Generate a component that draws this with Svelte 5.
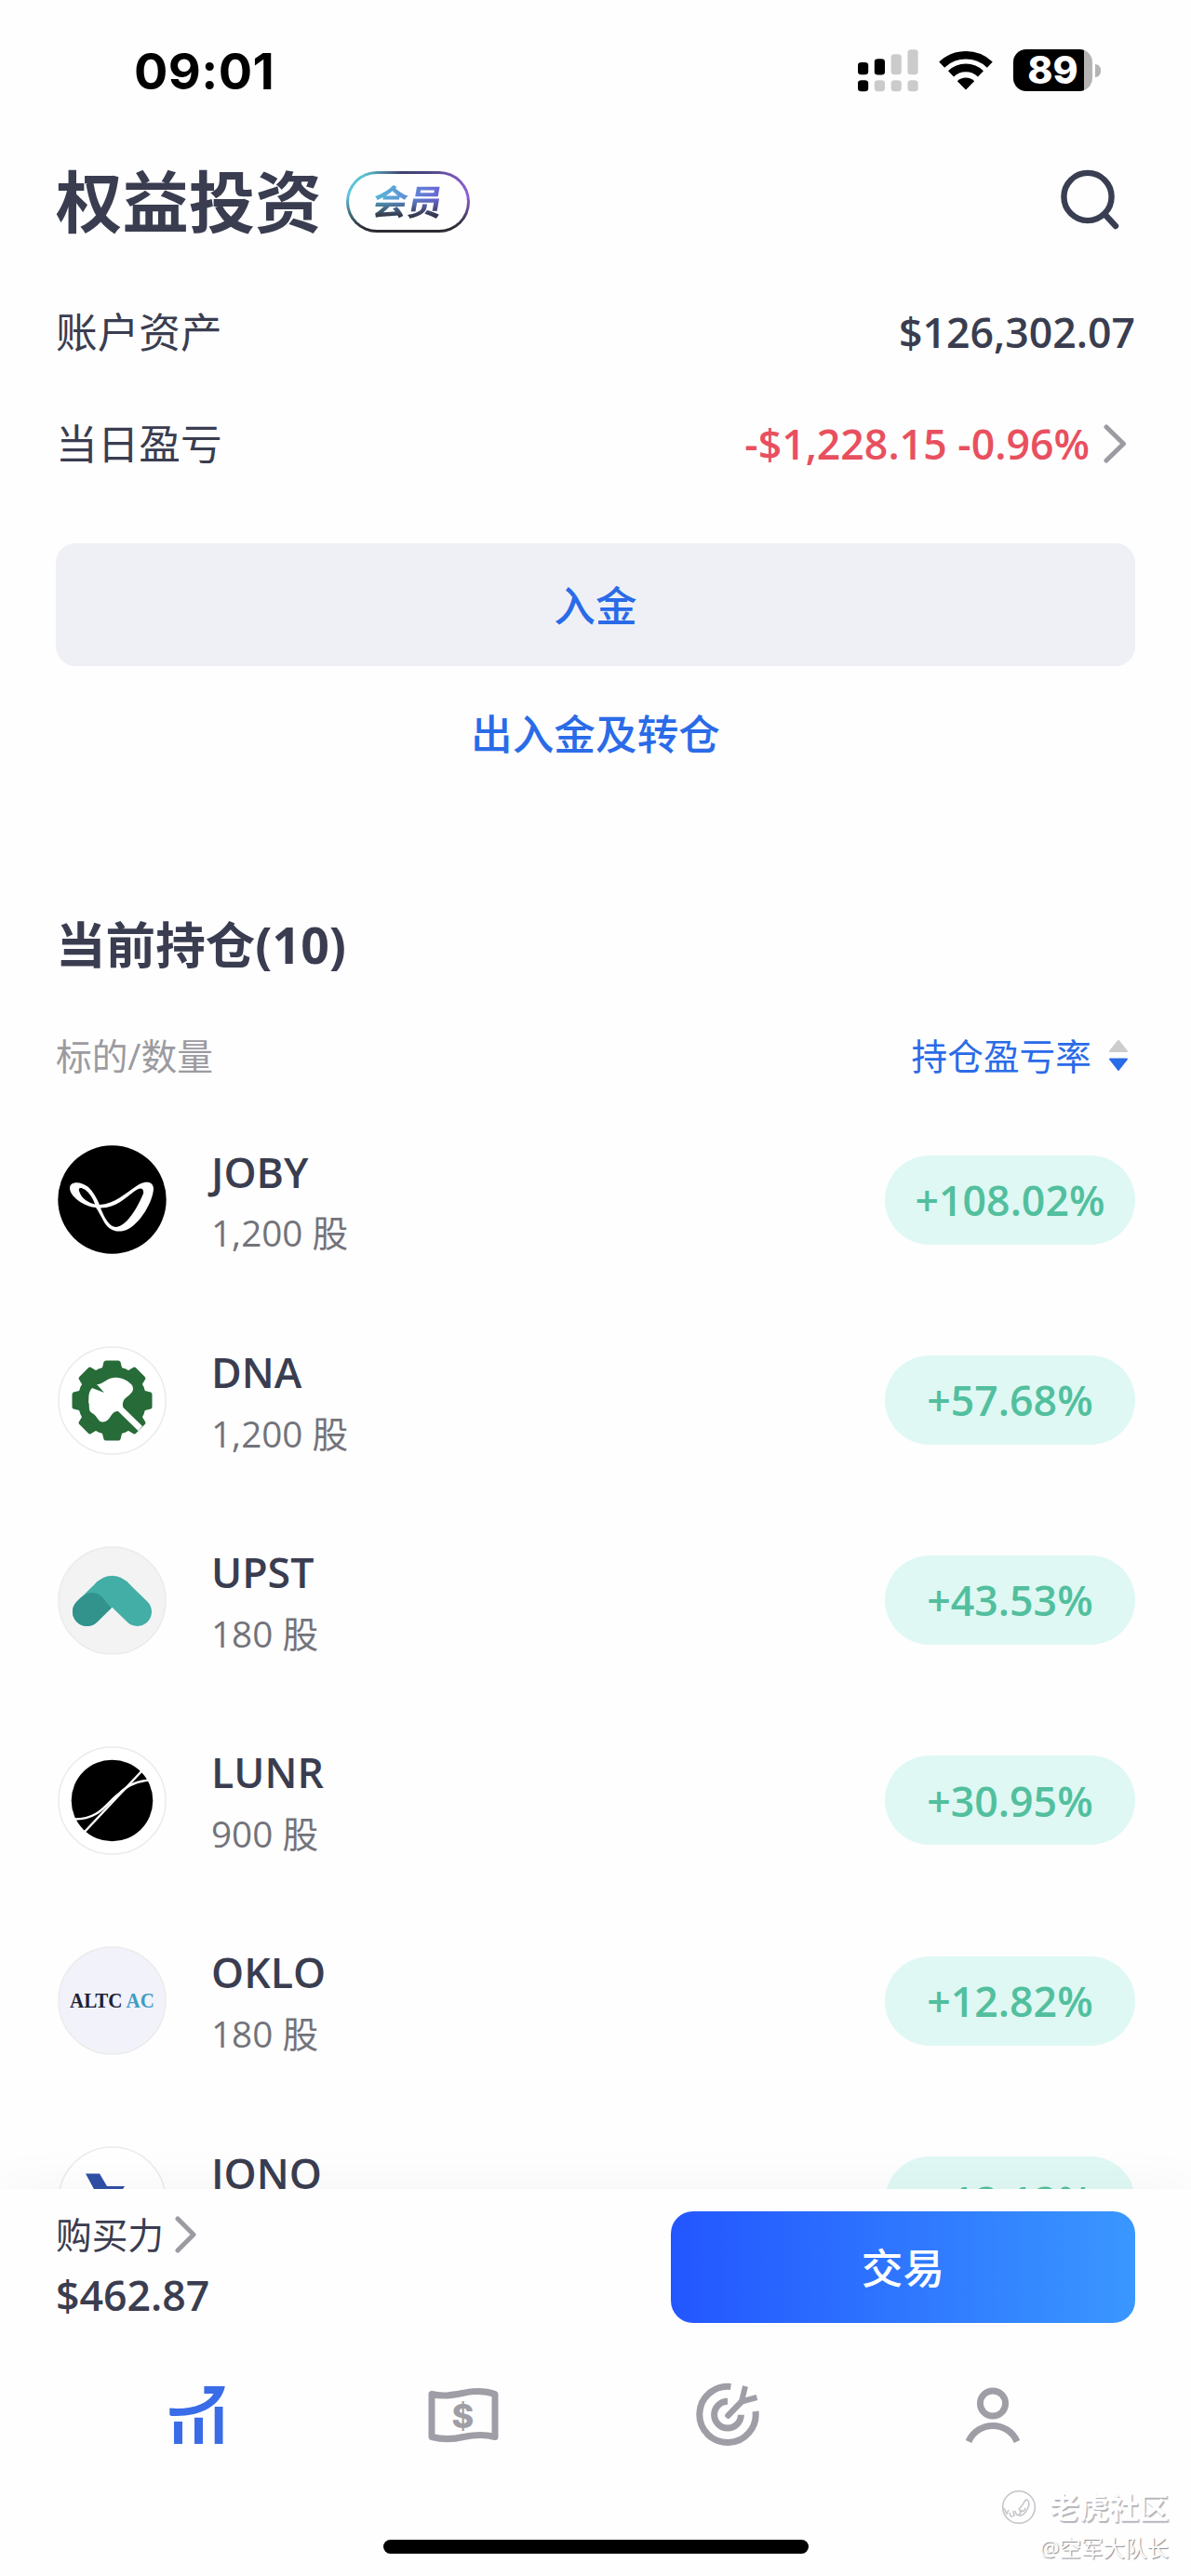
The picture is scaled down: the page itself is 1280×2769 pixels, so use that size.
<script>
  const holdings = [
    { symbol: 'JOBY', qty: '1,200', change: '+108.02%' },
    { symbol: 'DNA', qty: '1,200', change: '+57.68%' },
    { symbol: 'UPST', qty: '180', change: '+43.53%' },
    { symbol: 'LUNR', qty: '900', change: '+30.95%' },
    { symbol: 'OKLO', qty: '180', change: '+12.82%' },
    { symbol: 'IONO', qty: '180', change: '+12.12%' }
  ];
  const teeth = [0, 45, 90, 135, 180, 225, 270, 315];
</script>

<div class="page">
  <div class="status">
    <span class="time">09:01</span>
    <div class="indicators">
      <svg class="signal" width="65" height="46" viewBox="0 0 54 46" preserveAspectRatio="none">
        <rect x="0" y="14" width="9.3" height="13.3" rx="3.2" />
        <rect x="14.8" y="10.2" width="9.3" height="17.2" rx="3.2" />
        <g fill="#cbcbcb">
          <rect x="29.6" y="5.3" width="9.3" height="22" rx="3.2" />
          <rect x="44.4" y="0.3" width="9.3" height="27" rx="3.2" />
          <rect x="14.8" y="33.3" width="9.3" height="12" rx="3.2" />
          <rect x="29.6" y="33.3" width="9.3" height="12" rx="3.2" />
          <rect x="44.4" y="33.3" width="9.3" height="12" rx="3.2" />
        </g>
        <rect x="0" y="33.3" width="9.3" height="12" rx="3.2" />
      </svg>
      <svg class="wifi" width="58" height="43" viewBox="0 0 58 43">
        <g fill="none" stroke="#000" stroke-width="8.6">
          <path d="M3.2 15.6A37.5 37.5 0 0 1 54.8 15.6" />
          <path d="M13 25.4A23 23 0 0 1 45 25.4" />
        </g>
        <path d="M29 42.5L19.8 33.2A13.2 13.2 0 0 1 38.2 33.2Z" />
      </svg>
      <div class="battery"><div class="cell"><span>89</span></div><i></i></div>
    </div>
  </div>

  <header>
    <h1>权益投资</h1>
    <div class="badge"><span>会员</span></div>
    <svg class="search" width="66" height="66" viewBox="0 0 66 66" fill="none" stroke="#3a3e52">
      <circle cx="31" cy="30.5" r="25.6" stroke-width="6.4" />
      <path d="M49 49L61 62" stroke-width="6.4" stroke-linecap="round" />
    </svg>
  </header>

  <section class="summary">
    <div class="line"><span>账户资产</span><b>$126,302.07</b></div>
    <div class="line">
      <span>当日盈亏</span>
      <b class="loss">-$1,228.15 -0.96%</b>
      <svg class="chev" width="26" height="42" viewBox="0 0 26 42"><path d="M3 3L21.5 21L3 39" /></svg>
    </div>
  </section>

  <button class="deposit">入金</button>
  <a class="transfer" href="#transfer">出入金及转仓</a>

  <h2>当前持仓(10)</h2>
  <div class="cols">
    <span>标的/数量</span>
    <span class="sort">持仓盈亏率
      <svg width="22" height="36" viewBox="0 0 22 36">
        <path d="M2 13L11 2L20 13Z" fill="#cdcdd0" stroke="#cdcdd0" stroke-width="2" stroke-linejoin="round" />
        <path d="M2 21.5H20L11 33Z" fill="#2a6be8" stroke="#2a6be8" stroke-width="2" stroke-linejoin="round" />
      </svg>
    </span>
  </div>

  <div class="list">
    {#each holdings as h}
      <div class="row">
        <svg class="logo" width="117" height="117" viewBox="0 0 117 117">
          {#if h.symbol === 'JOBY'}
            <circle cx="58.5" cy="58.5" r="58.2" />
            <path
              fill="#fff"
              fill-rule="evenodd"
              d="M13 46C13 39 24 38 33 45C38 50 42 57 45 64C62 63 72 52 86 43C96 37 103 40 103 47C102 62 88 84 76 90C64 96 54 91 49 81C46 75 43 70 41 67C28 66 13 55 13 46ZM23 49C25 57 33 62 40 63.5C38 57 34 51 29 47.500C25 45 22 45.500 23 49ZM46 67.500C50 77 55 88 63 88C74 87 86 67 92 52C93 46 89 45 84 48.500C72 57 64 67 46 67.500Z"
            />
          {:else if h.symbol === 'DNA'}
            <circle class="ring" cx="58.5" cy="58.5" r="57.5" fill="#fff" />
            <g fill="#276b38">
              <circle cx="58.5" cy="58.5" r="37" />
              {#each teeth as a}
                <path d="M47.500 25L49.500 17Q50 15.500 52 15.500H65Q67 15.500 67.500 17L69.500 25Z" transform="rotate({a} 58.5 58.5)" />
              {/each}
            </g>
            <path
              fill="#fff"
              d="M50 50L42 41C48 42 51 35 60 34C69 33 75 37 80 42C84 50 75 53 71 58Q69 63 70.500 66L91 86L86.500 91L65 70C57 69 57 81 49 81.500C43 82 43 75 37 72C32 69 35 64 33 60C34 56 32 50 37 45Z"
            />
          {:else if h.symbol === 'UPST'}
            <circle class="ring" cx="58.5" cy="58.5" r="57.5" fill="#f3f3f4" />
            <path d="M31.500 70.500L50 52.500Q58.500 42 67 52.500L85.500 70.500" fill="none" stroke="#43aea5" stroke-width="31" stroke-linecap="round" stroke-linejoin="round" />
            <path d="M20.500 59.500C31 49 40 47 48 55L57.500 66.500L42.500 81.500A15.500 15.500 0 0 1 20.500 59.500Z" fill="#31938b" />
          {:else if h.symbol === 'LUNR'}
            <circle class="ring" cx="58.5" cy="58.5" r="57.5" fill="#fff" />
            <circle cx="58.5" cy="58.5" r="43.800" />
            <g fill="none" stroke="#fff" stroke-width="2.400">
              <path d="M91 26L29 92" />
              <path d="M17 78.500C46 79 53 60 66 51C76 41 86 37 100 36.500" />
            </g>
          {:else if h.symbol === 'OKLO'}
            <circle class="ring" cx="58.5" cy="58.5" r="57.5" fill="#f2f2fa" />
            <text class="mark" x="13" y="66" textLength="91" lengthAdjust="spacingAndGlyphs" fill="#1d2238">ALTC <tspan fill="#3f9cc4">AC</tspan></text>
          {:else}
            <circle class="ring" cx="58.5" cy="58.5" r="57.5" fill="#fff" />
            <path d="M30 29.500H45L53 43H72L60 62L40 48Z" fill="#2f50a6" />
          {/if}
        </svg>
        <div class="name">
          <strong>{h.symbol}</strong>
          <span>{h.qty} 股</span>
        </div>
        <div class="pill">{h.change}</div>
      </div>
    {/each}
  </div>

  <footer>
    <div class="trade">
      <div class="power">
        <span>购买力
          <svg class="chev" width="24" height="40" viewBox="0 0 24 40"><path d="M3 3L20 20L3 37" /></svg>
        </span>
        <b>$462.87</b>
      </div>
      <button class="buy">交易</button>
    </div>

    <nav>
      <svg width="68" height="72" viewBox="0 0 68 72" fill="#3a6ce8">
        <path d="M62.800 5.300C58 27 35 38.500 5 36.900Q3.300 36.800 3.300 35V28.600C28 30.500 44 24 50.500 13H40.400V5H62Q63 5 62.800 5.300Z" />
        <path d="M8 43H17V67H8ZM30 38.700H39V67H30ZM51.700 27H60.500V67H51.700Z" />
      </svg>
      <svg width="84" height="72" viewBox="0 0 84 72">
        <path d="M8 13.500C20 16.500 30 14.500 42 12.300C54 9.500 65 9.500 76 13.500V59.500C65 56.500 54 57 42 59.500C30 62.500 20 62.500 8 59.500Z" fill="none" stroke="#9f9ea6" stroke-width="7" stroke-linejoin="round" />
        <text class="dollar" x="41.500" y="49.500" text-anchor="middle">$</text>
      </svg>
      <svg width="76" height="80" viewBox="0 0 76 80" fill="none" stroke="#9f9ea6" stroke-width="7">
        <path d="M41.400 9.400A30.200 30.200 0 1 0 68 36" />
        <path d="M38 25.200A14.400 14.400 0 1 0 52.400 39.800" />
        <path d="M38.500 40.500L53 25.500" stroke-width="6.500" stroke-linecap="round" />
        <path d="M53 25.500L57 9M53 25.500L69.500 21" stroke-width="6" />
      </svg>
      <svg width="66" height="72" viewBox="0 0 66 72" fill="none" stroke="#9f9ea6" stroke-width="7">
        <circle cx="33" cy="23.500" r="13.600" />
        <path d="M7 64.500A28.300 28.300 0 0 1 59 64.500" />
      </svg>
    </nav>
    <div class="home"></div>
  </footer>

  <div class="watermark">
    <div class="brand">
      <svg width="38" height="38" viewBox="0 0 38 38" fill="none" stroke="#c3c3c9" stroke-width="1.500">
        <circle cx="19" cy="19" r="17.300" />
        <path d="M3 20L6 26L8 22M9 25Q10 31 14 28L13 23M15 23Q17 31 21 25L19 20M21 22Q24 26 26 20M19 28C26 29 33 15 28 11C24 10 25 17 20 20" />
      </svg>
      <span>老虎社区</span>
    </div>
    <div class="author">@空军大队长</div>
  </div>
</div>

<style>
  :global(body) {
    margin: 0;
    background: #fefefe;
  }
  .page {
    position: relative;
    display: flex;
    flex-direction: column;
    box-sizing: border-box;
    width: 1280px;
    height: 2769px;
    padding: 0 60px;
    overflow: hidden;
    background: #fefefe;
    color: #3a3d50;
    font-family: 'Open Sans', 'Noto Sans CJK SC', sans-serif;
    font-size: 44.65px;
    line-height: 1;
  }
  h1,
  h2 {
    margin: 0;
  }
  button {
    border: 0;
    padding: 0;
    font: inherit;
  }
  svg {
    display: block;
    flex: none;
  }
  b,
  strong {
    font-weight: 600;
  }

  .status {
    display: flex;
    align-items: center;
    justify-content: space-between;
    height: 151px;
    padding: 0 37px 0 84px;
    color: #000;
    font-family: Inter, sans-serif;
  }
  .time {
    font-size: 54px;
    font-weight: 750;
    letter-spacing: 0.4px;
    padding-top: 3px;
  }
  .indicators {
    display: flex;
    align-items: center;
  }
  .signal {
    margin-right: 22px;
  }
  .wifi {
    margin-right: 22px;
  }
  .battery {
    display: flex;
    align-items: center;
    gap: 3px;
  }
  .cell {
    display: flex;
    align-items: center;
    justify-content: center;
    width: 85px;
    height: 45px;
    border-radius: 14px;
    background: linear-gradient(90deg, #000 76px, #b4b4b4 76px);
    color: #fff;
    font-size: 41px;
    font-weight: 800;
  }
  .battery i {
    width: 6px;
    height: 14px;
    border-radius: 0 6px 6px 0;
    background: #b4b4b4;
  }

  header {
    display: flex;
    align-items: center;
    height: 132px;
  }
  h1 {
    font-size: 71.4px;
    font-weight: 700;
  }
  .badge {
    display: flex;
    align-items: center;
    justify-content: center;
    box-sizing: border-box;
    width: 133px;
    height: 66px;
    margin-left: 26px;
    border: 3px solid transparent;
    border-radius: 33px;
    background:
      linear-gradient(#fefefe, #fefefe) padding-box,
      linear-gradient(180deg, transparent 40%, #2c2c34 92%) border-box,
      linear-gradient(90deg, #5cc4de 0%, #5cc4cf 14%, #3f4270 45%, #4a4580 65%, #9160d8 100%) border-box;
  }
  .badge span {
    background: linear-gradient(90deg, #55b9d6 0%, transparent 65%), #6a5fd6;
    background: linear-gradient(180deg, transparent 40%, #33343f 92%), linear-gradient(90deg, #55b9d6, #6a5fd6);
    background-clip: text;
    -webkit-background-clip: text;
    color: transparent;
    font-size: 37.5px;
    font-weight: 700;
    transform: skewX(-10deg);
  }
  .search {
    align-self: flex-start;
    margin: 30px 16px 0 auto;
  }

  .summary {
    padding-top: 14px;
  }
  .line {
    display: flex;
    align-items: center;
    height: 120px;
  }
  .line b {
    margin-left: auto;
  }
  .line .loss {
    color: #e8505f;
  }
  .chev {
    fill: none;
    stroke: #9b9ba1;
    stroke-width: 5;
    stroke-linecap: round;
    stroke-linejoin: round;
  }
  .line .chev {
    margin: 0 8px 0 15px;
  }

  .deposit {
    flex: none;
    height: 132px;
    margin-top: 47px;
    padding-top: 2px;
    border-radius: 21px;
    background: #eff0f6;
    color: #2a6be8;
    font-weight: 500;
  }
  .transfer {
    align-self: center;
    margin-top: 51px;
    color: #2a6be8;
    font-weight: 500;
    text-decoration: none;
  }
  h2 {
    margin-top: 177px;
    font-size: 53.6px;
    font-weight: 700;
  }
  .cols {
    display: flex;
    align-items: center;
    justify-content: space-between;
    height: 60px;
    margin-top: 63px;
    color: #9b9ba1;
    font-size: 38.7px;
  }
  .sort {
    display: flex;
    align-items: center;
    gap: 18px;
    padding-right: 7px;
    color: #2a6be8;
  }

  .list {
    flex: 1;
    min-height: 0;
    margin-top: 17px;
    overflow: hidden;
  }
  .row {
    display: flex;
    align-items: center;
    height: 215.2px;
  }
  .logo {
    margin-left: 2px;
  }
  .ring {
    stroke: #ebebed;
    stroke-width: 1.5;
  }
  .mark {
    font: bold 24px 'Liberation Serif', serif;
  }
  .name {
    display: flex;
    flex-direction: column;
    gap: 24px;
    margin-left: 48px;
    padding-top: 3px;
  }
  .name span {
    color: #73737b;
    font-size: 38.7px;
  }
  .pill {
    display: flex;
    align-items: center;
    justify-content: center;
    box-sizing: border-box;
    width: 269px;
    height: 96px;
    margin-left: auto;
    padding-top: 1px;
    border-radius: 48px;
    background: #dff8f3;
    color: #52bf9e;
    font-weight: 600;
  }

  footer {
    position: relative;
    flex: none;
    height: 416px;
    margin: 0 -60px;
    background: #fefefe;
    box-shadow: 0 -6px 50px rgba(0, 0, 0, 0.035);
  }
  .trade {
    display: flex;
    justify-content: space-between;
    padding: 24px 60px 0;
  }
  .power {
    display: flex;
    flex-direction: column;
    gap: 23px;
    padding-top: 5px;
  }
  .power span {
    display: flex;
    align-items: center;
    gap: 12px;
    font-size: 38.7px;
  }
  .buy {
    width: 499px;
    height: 120px;
    padding-top: 2px;
    border-radius: 24px;
    background: linear-gradient(90deg, #2356ff, #3a97ff);
    color: #fff;
    font-weight: 500;
  }
  nav {
    display: grid;
    grid-template-columns: repeat(4, 1fr);
    align-items: center;
    justify-items: center;
    height: 80px;
    margin: 59px 71px 0;
  }
  .dollar {
    fill: #9f9ea6;
    font: 800 36px Inter, sans-serif;
  }
  .home {
    width: 457px;
    height: 15px;
    margin: 94px auto 0;
    border-radius: 8px;
    background: #000;
  }

  .watermark {
    position: absolute;
    right: 24px;
    bottom: 18px;
    display: flex;
    flex-direction: column;
    align-items: flex-end;
    gap: 14px;
    color: #fefefe;
    font-size: 32px;
    font-weight: 700;
    text-shadow: 1.5px 1.5px 1px #b4b4bc;
  }
  .brand {
    display: flex;
    align-items: center;
    gap: 14px;
  }
  .author {
    font-size: 23.5px;
    font-weight: 400;
    text-shadow: 1px 1px 1px #8a8a92;
  }
</style>
